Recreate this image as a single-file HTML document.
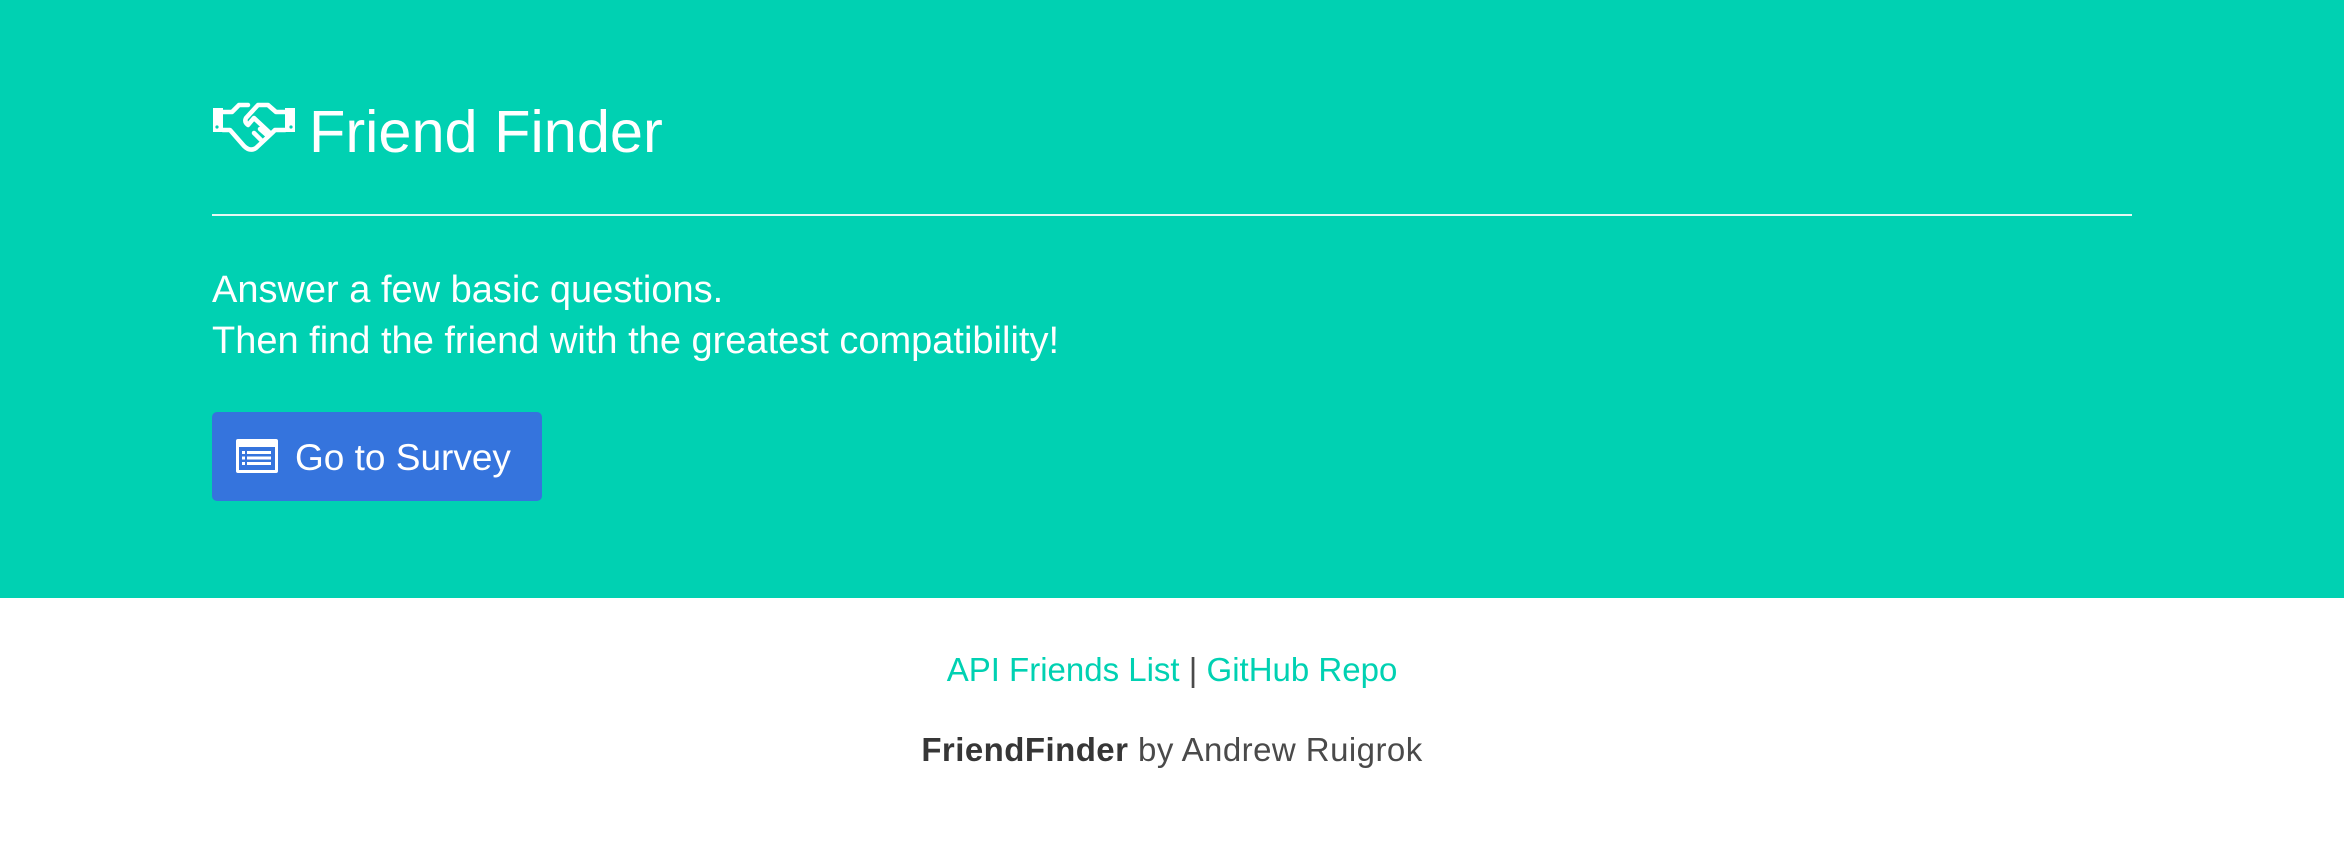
<!DOCTYPE html>
<html><head><meta charset="utf-8"><style>
html,body{margin:0;padding:0;width:2344px;height:842px;overflow:hidden;background:#fff;font-family:"Liberation Sans",sans-serif}
.hero{position:absolute;left:0;top:0;width:2344px;height:598px;background:#00d1b2;color:#fff}
.title{position:absolute;left:309px;top:96px;font-size:59.5px;line-height:72px;font-weight:300}
.icon{position:absolute;left:212px;top:100px}
.hr{position:absolute;left:212px;top:214px;width:1920px;height:2px;background:#e6f7f3}
.sub{position:absolute;left:212px;top:265px;font-size:38px;line-height:51px;font-weight:300}
.btn{position:absolute;left:212px;top:412px;width:330px;height:89px;background:#3574dd;border-radius:5px}
.btn span{position:absolute;left:83px;top:22px;font-size:37px;line-height:48px;font-weight:300}
.foot1{position:absolute;left:0;width:2344px;top:650px;text-align:center;font-size:33px;line-height:40px;color:#4a4a4a}
.foot1 a{color:#00d1b2;text-decoration:none}
.foot2{position:absolute;left:0;width:2344px;top:730px;text-align:center;font-size:33px;line-height:40px;color:#4a4a4a;letter-spacing:0.45px}
.foot2 b{color:#363636}
</style></head><body>
<div class="hero">
<svg class="icon" width="84" height="56" viewBox="0 0 84 56" fill="none" stroke="#fff">
<rect x="1" y="8" width="10" height="24" fill="#fff" stroke="none"/>
<rect x="73" y="8" width="10" height="24" fill="#fff" stroke="none"/>
<circle cx="5" cy="27" r="1.6" fill="#00d1b2" stroke="none"/>
<circle cx="79" cy="27" r="1.6" fill="#00d1b2" stroke="none"/>
<path d="M11 12 L20 12 L27 5 L36 5 M11 30 L18 30 L32 46 Q38 52 44 48 L60 33 L63 30 L73 30 M73 12 L64 12 L56 5 L46 5 L34 18 Q32 22 36 25 L42 18 L58 33 M50 41 L42 33 M56 36 L48 29" stroke-width="4.5" stroke-linecap="round" stroke-linejoin="round"/>
</svg>
<div class="title">Friend Finder</div>
<div class="hr"></div>
<div class="sub">Answer a few basic questions.<br>Then find the friend with the greatest compatibility!</div>
<div class="btn">
<svg style="position:absolute;left:24px;top:27px" width="42" height="34" viewBox="0 0 42 34">
<rect x="0" y="0" width="42" height="34" rx="2" fill="#fff"/>
<rect x="3" y="8" width="36" height="23" fill="#3574dd"/>
<g fill="#fff"><rect x="6" y="12" width="3" height="3"/><rect x="6" y="17.5" width="3" height="3"/><rect x="6" y="23" width="3" height="3"/>
<rect x="11" y="12" width="24" height="3"/><rect x="11" y="17.5" width="24" height="3"/><rect x="11" y="23" width="24" height="3"/></g>
</svg>
<span>Go to Survey</span></div>
</div>
<div class="foot1"><a>API Friends List</a> | <a>GitHub Repo</a></div>
<div class="foot2"><b>FriendFinder</b> by Andrew Ruigrok</div>
</body></html>
